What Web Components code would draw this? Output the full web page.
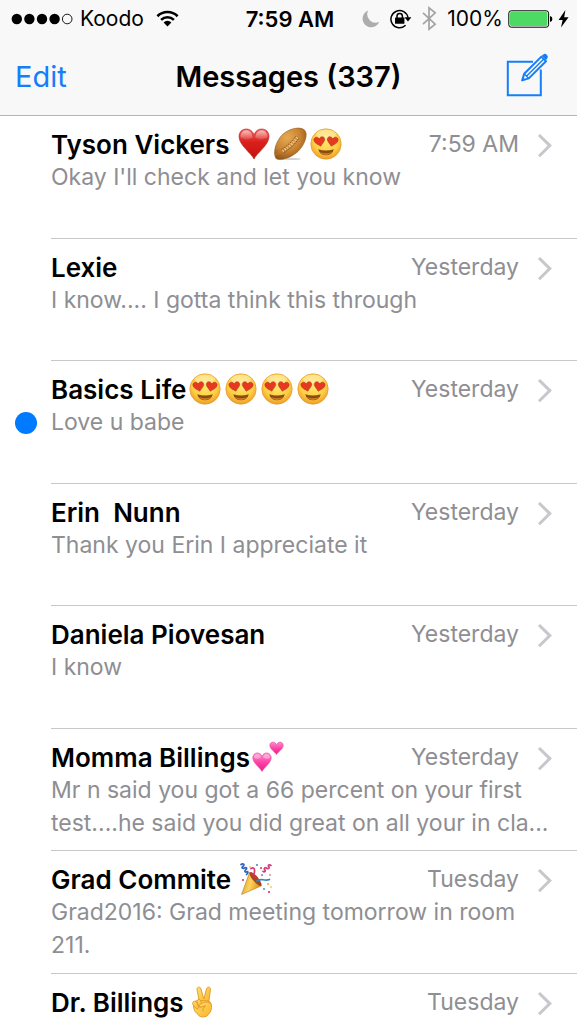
<!DOCTYPE html>
<html lang="en">
<head>
<meta charset="utf-8">
<meta name="viewport" content="width=device-width, initial-scale=1">
<title>Messages</title>
<style>
  body {
    margin: 0;
    height: 100vh;
    overflow: hidden;
    background: #fff;
    color: #000;
    font-family: Inter, "Liberation Sans", sans-serif;
  }
</style>
</head>
<body>
<messages-app>
  <status-bar slot="header" carrier="Koodo" time="7:59 AM" battery="100%"></status-bar>
  <nav-bar slot="header">Messages (337)</nav-bar>

  <message-row time="7:59 AM">Tyson Vickers <emoji-icon name="heart"></emoji-icon><emoji-icon name="football"></emoji-icon><emoji-icon name="love"></emoji-icon><span slot="preview">Okay I'll check and let you know</span></message-row>
  <message-row time="Yesterday">Lexie<span slot="preview">I know.... I gotta think this through</span></message-row>
  <message-row time="Yesterday" unread>Basics Life<emoji-icon name="love"></emoji-icon><emoji-icon name="love"></emoji-icon><emoji-icon name="love"></emoji-icon><emoji-icon name="love"></emoji-icon><span slot="preview">Love u babe</span></message-row>
  <message-row time="Yesterday">Erin  Nunn<span slot="preview">Thank you Erin I appreciate it</span></message-row>
  <message-row time="Yesterday">Daniela Piovesan<span slot="preview">I know</span></message-row>
  <message-row time="Yesterday">Momma Billings<emoji-icon name="hearts"></emoji-icon><span slot="preview">Mr n said you got a 66 percent on your first test....he said you did great on all your in cla...</span></message-row>
  <message-row time="Tuesday">Grad Commite <emoji-icon name="party"></emoji-icon><span slot="preview">Grad2016: Grad meeting tomorrow in room 211.</span></message-row>
  <message-row time="Tuesday">Dr. Billings<emoji-icon name="victory"></emoji-icon></message-row>
</messages-app>

<script>
const appTemplate = document.createElement("template");
appTemplate.innerHTML = `
  <style>
    :host { display: block; }
    header {
      background: #f8f8f8;
      border-bottom: 1px solid #b4b4b7;
    }
    ::slotted(message-row) { min-height: 123px; }
    ::slotted(message-row:nth-of-type(even)) { min-height: 122px; }
  </style>
  <header><slot name="header"></slot></header>
  <main><slot></slot></main>
`;

const statusTemplate = document.createElement("template");
statusTemplate.innerHTML = `
  <style>
    :host {
      display: grid;
      grid-template-columns: 1fr auto 1fr;
      align-items: center;
      height: 37px;
      padding: 0 8px 0 11px;
      font-size: 21px;
    }
    div { display: flex; align-items: center; }
    svg { display: block; flex: none; }
    .left { gap: 7px; }
    .wifi { margin-left: 5px; }
    .time { font-weight: 600; font-size: 22px; }
    .right { justify-content: flex-end; gap: 10px; }
    .power { gap: 5px; }
  </style>
  <div class="left">
    <svg width="62" height="12" viewBox="0 0 62 12" role="img" aria-label="Signal">
      <circle cx="5.8" cy="6" r="5.2"/><circle cx="18.4" cy="6" r="5.2"/>
      <circle cx="31" cy="6" r="5.2"/><circle cx="43.6" cy="6" r="5.2"/>
      <circle cx="56.2" cy="6" r="4.8" fill="none" stroke="#000" stroke-width=".9"/>
    </svg>
    <span class="carrier"></span>
    <svg class="wifi" width="23" height="17" viewBox="0 0 23 17" role="img" aria-label="Wi-Fi">
      <g fill="none" stroke="#000" stroke-width="2.6">
        <path d="M1.4 6.2a14.4 14.4 0 0 1 20.2 0"/>
        <path d="M5.1 9.9a9.2 9.2 0 0 1 12.8 0"/>
      </g>
      <path d="M7.6 12.4a5.6 5.6 0 0 1 7.8 0L11.5 16.4z"/>
    </svg>
  </div>
  <span class="time"></span>
  <div class="right">
    <svg width="18" height="18" viewBox="0 0 18 18" role="img" aria-label="Do not disturb">
      <path fill="#adadad" d="M6.2.6A8.6 8.6 0 1 0 17.2 11.8 8.3 8.3 0 0 1 6.2.6z"/>
    </svg>
    <svg width="22" height="20" viewBox="0 0 22 20" role="img" aria-label="Rotation lock">
      <path fill="none" stroke="#000" stroke-width="1.5" d="M15.6 16.3A8.6 8.6 0 1 1 18 8.7"/>
      <path d="M14.4 8.2h7l-3.4 4.4z"/>
      <rect x="5" y="8.6" width="9.4" height="6.2" rx=".6"/>
      <path fill="none" stroke="#000" stroke-width="1.5" d="M7 9V7.2a2.7 2.7 0 0 1 5.4 0V9"/>
    </svg>
    <svg width="15" height="25" viewBox="0 0 15 25" role="img" aria-label="Bluetooth">
      <path fill="none" stroke="#a3a3a3" stroke-width="1.7" d="M1 6.8l12.2 11.3-6.2 5V1.9l6.2 5L1 18.1"/>
    </svg>
    <div class="power">
      <span class="level"></span>
      <svg width="45" height="18" viewBox="0 0 45 18" role="img" aria-label="Battery full">
        <rect x=".8" y=".8" width="39.8" height="16.4" rx="2.4" fill="none" stroke="#000" stroke-width="1"/>
        <rect x="2" y="2" width="37.4" height="14" rx="1.4" fill="#4cd964"/>
        <path d="M42 6q2.4 .6 2.4 3T42 12z"/>
      </svg>
      <svg width="11" height="18" viewBox="0 0 11 18" role="img" aria-label="Charging">
        <path d="M7.4 0L.6 10h4L3 17.4 10.6 7.2H6.2z"/>
      </svg>
    </div>
  </div>
`;

const navTemplate = document.createElement("template");
navTemplate.innerHTML = `
  <style>
    :host {
      display: grid;
      grid-template-columns: 1fr auto 1fr;
      align-items: center;
      height: 78px;
      padding: 0 28px 0 15px;
    }
    h1 { margin: 0 -7px 0 6px; font-size: 29px; font-weight: 600; }
    button {
      padding: 0;
      border: 0;
      background: none;
      color: #157efb;
      font: inherit;
      font-size: 29px;
      cursor: pointer;
    }
    .edit { justify-self: start; }
    .compose { justify-self: end; padding-bottom: 5px; }
    svg { display: block; }
  </style>
  <button class="edit">Edit</button>
  <h1><slot></slot></h1>
  <button class="compose" aria-label="New message">
    <svg width="43" height="46" viewBox="0 0 43 46" fill="none" stroke="#157efb">
      <path stroke-width="2" d="M27 10.8H1.8v33.4h33V18.4"/>
      <path stroke-width="2" stroke-linejoin="round" d="M16.2 29.4l2-6.6L35.4 5.6l4.6 4.6L22.8 27.4z"/>
      <path stroke-width="1.4" d="M18.4 23l4.2 4.2M20.7 25.1L37.8 8"/>
      <path fill="#157efb" stroke="none" d="M35.8 4.8l1.4-1.4q1.7-1.4 3.6.3t.5 3.9l-1.3 1.4zM15.6 30l1.2-4 2.8 2.8z"/>
    </svg>
  </button>
`;

const rowTemplate = document.createElement("template");
rowTemplate.innerHTML = `
  <style>
    :host { display: grid; }
    a {
      display: grid;
      grid-template-columns: 51px minmax(0, 1fr);
      color: inherit;
      text-decoration: none;
    }
    .dot {
      align-self: center;
      justify-self: center;
      width: 22px;
      height: 22px;
      border-radius: 50%;
    }
    :host([unread]) .dot { background: #007aff; }
    .body {
      padding: 12px 24px 0 0;
      border-bottom: 1px solid #c8c7cc;
      line-height: 33px;
    }
    .top { display: flex; align-items: center; }
    h2 {
      flex: 1;
      margin: 0;
      font-size: 26px;
      font-weight: 600;
      line-height: 33px;
      height: 33px;
      white-space: pre;
    }
    time { color: #8e8e93; font-size: 23px; }
    .chevron { margin-left: 18px; }
    p {
      margin: 0;
      color: #8e8e93;
      font-size: 23px;
    }
  </style>
  <a href="#">
    <span class="dot"></span>
    <div class="body">
      <div class="top">
        <h2><slot></slot></h2>
        <time></time>
        <svg class="chevron" width="16" height="26" viewBox="0 0 16 26" aria-hidden="true">
          <path fill="none" stroke="#c7c7cc" stroke-width="3" d="M2 3l10.8 10.6L2 24.2"/>
        </svg>
      </div>
      <p><slot name="preview"></slot></p>
    </div>
  </a>
`;

// all emoji are drawn on a 32 x 32 grid
const emoji = {
  heart: {
    label: "red heart",
    art: `
      <defs><linearGradient id="g" x2="0" y2="1"><stop stop-color="#f0605a"/><stop offset=".45" stop-color="#d91f1c"/><stop offset="1" stop-color="#c4120f"/></linearGradient>
      <linearGradient id="s" x2="0" y2="1"><stop stop-color="#fff" stop-opacity=".6"/><stop offset="1" stop-color="#fff" stop-opacity=".1"/></linearGradient></defs>
      <path fill="url(#g)" stroke="#b5211d" stroke-width=".6" d="M16 31C13 25 1 17 1 8.600C1 4 4 1 8.300 1 12 1 15 3.500 16 7 17 3.500 20 1 23.700 1 28 1 31 4 31 8.600 31 17 19 25 16 31z"/>
      <path fill="url(#s)" d="M2.500 9C2.500 5 5 2.200 8.300 2.200c3.700 0 6 3 6.400 7.400-4 2.600-9 2.400-12.200-.6zM29.500 9c0-4-2.500-6.800-5.800-6.800-3.700 0-6 3-6.400 7.400 4 2.600 9 2.400 12.200-.6z"/>`
  },
  football: {
    label: "rugby football",
    art: `
      <defs><radialGradient id="g" cx=".4" cy=".3" r=".75"><stop stop-color="#e6a954"/><stop offset=".55" stop-color="#ca8532"/><stop offset="1" stop-color="#8c5217"/></radialGradient></defs>
      <ellipse cx="18" cy="31" rx="9" ry="1" fill="#000" opacity=".18"/>
      <path fill="url(#g)" stroke="#9b6120" stroke-width=".6" d="M2 30.500C-1.500 25 1.500 13.500 8.500 6.500 15 .5 26-2 30.500 2c4 4 .5 14.500-6.500 21.500C17 30 6 33.500 2 30.500z"/>
      <path fill="none" stroke="#bd8037" stroke-width=".7" d="M1.500 27C8 24 22 13 29.500 1.500"/>
      <path fill="none" stroke="#e9c999" stroke-width="2.800" stroke-dasharray="1.200 1.500" d="M8.500 23C14 19.500 20 14.500 23.500 9"/>
      <path fill="none" stroke="#70410f" stroke-width=".8" stroke-dasharray="1.600 1.100" d="M7.500 21.500C13 18 18.500 13 22 8M10 24.500C15.500 21 21.500 16 25 10"/>`
  },
  love: {
    label: "smiling face with heart-eyes",
    art: `
      <defs><radialGradient id="g" cx=".5" cy=".38" r=".62"><stop stop-color="#ffeb70"/><stop offset=".65" stop-color="#fdcf46"/><stop offset="1" stop-color="#ee9d25"/></radialGradient></defs>
      <circle cx="16" cy="16" r="15.200" fill="url(#g)" stroke="#e59a34" stroke-width=".7"/>
      <ellipse cx="16" cy="6.500" rx="10" ry="4.800" fill="#fff" opacity=".35"/>
      <path fill="#e7391f" stroke="#b9361e" stroke-width=".6" d="M10.800 18.200C8.500 16.500 4.300 15.500 3.900 12c-.3-2.800 3.800-4 5.400-1 1-3.300 5.400-2.800 5.400.2 0 2.700-2.700 4.400-3.900 7zM21.200 18.200c2.300-1.700 6.500-2.700 6.900-6.200.3-2.800-3.800-4-5.400-1-1-3.300-5.400-2.800-5.400.2 0 2.700 2.700 4.400 3.900 7z"/>
      <path fill="#8d4a12" d="M8.200 21.200Q16 24 23.800 21.200 22.200 27.300 16 27.300T8.200 21.200z"/>
      <path fill="#c87e20" d="M10 24q6 2.500 12 0-2 2.900-6 2.900T10 24z"/>`
  },
  hearts: {
    label: "two hearts",
    art: `
      <defs><linearGradient id="g" x2="0" y2="1"><stop stop-color="#ff8fcb"/><stop offset=".55" stop-color="#fb3ea5"/><stop offset="1" stop-color="#e91e8c"/></linearGradient></defs>
      <g fill="url(#g)" stroke="#e64ca2" stroke-width=".6">
        <path d="M10 30.500C8 26.500.8 22 .8 16.800c0-5.600 7.300-6.800 9.200-1.300 1.900-5.500 9.200-4.300 9.200 1.300 0 5.200-7.200 9.700-9.200 13.700z"/>
        <path d="M24.500 13.500c-1.500-2.800-6.700-5.300-6.700-9C17.800.3 23 0 24.500 3.700 26 0 31.200.3 31.200 4.500c0 3.700-5.200 6.200-6.700 9z"/>
      </g>
      <path fill="#fff" opacity=".35" d="M2 16.500c.3-4 5-5 7-.5-1.500 2-5 2.500-7 .5zM11 16c2-4.500 6.700-3.500 7 .5-2 2-5.500 1.500-7-.5z"/>`
  },
  party: {
    label: "party popper",
    art: `
      <defs><linearGradient id="g" x2="1" y2=".3"><stop stop-color="#d78d1b"/><stop offset=".55" stop-color="#ffd45c"/><stop offset="1" stop-color="#dd9422"/></linearGradient></defs>
      <path fill="url(#g)" stroke="#a9691a" stroke-width=".5" d="M1.500 31.500L9.500 9.500Q17 14 21 23z"/>
      <path fill="#9a4c1a" d="M9.500 9.500c2.500-1 6 2 9 6s4 7.500 2.500 7.500c-3 0-12-8.500-11.500-13.500z"/>
      <path fill="#c23c2d" d="M10 9.500c2-1 5.500 2 8.500 6l-3 1.500q-5-3.500-5.500-7.500z"/>
      <g fill="none" stroke-linecap="round" stroke-width="1.700">
        <path stroke="#2f63bd" d="M1 1.500c2.500-1.500 4 .5 2 1.700s-.5 3 1.500 1.800 3 .6 1.200 1.900-.3 2.800 1.300 1.900.8 2.200-.5 2.700"/>
        <path stroke="#d73a76" d="M11 5.500c4-2 4 2 3 6M31 2.500c-1.500-1.500-3.500 0-2.200 1.200s-1 2.800-2.300 1.500-3 .2-1.700 1.700-.6 2.700-1.800 1.500"/>
        <path stroke="#3a83c8" d="M17 18c4-3.500 7 .5 12.500-1.500"/>
      </g>
      <g fill="#3d83cb"><circle cx="17" cy="2" r="1"/><circle cx="22" cy="12" r=".9"/><circle cx="24" cy="26" r=".9"/></g>
      <g fill="#d7325f"><circle cx="3" cy="17" r="1.100"/><circle cx="21" cy="5" r="1"/><circle cx="30" cy="12" r=".8"/><circle cx="29" cy="29" r="1.100"/></g>
      <g fill="#e5a531"><circle cx="10" cy="4" r=".8"/><circle cx="28" cy="21" r="1"/><circle cx="31" cy="24" r=".8"/></g>`
  },
  victory: {
    label: "victory hand",
    art: `
      <defs><linearGradient id="g" x2="1" y2="1"><stop stop-color="#ffdf70"/><stop offset="1" stop-color="#fbb42a"/></linearGradient></defs>
      <g fill="url(#g)" stroke="#dc8f1d" stroke-width=".8" stroke-linejoin="round">
        <path d="M13.500 17L11 3.500C10.600.8 14.300.2 15 2.800L17.800 13 20.500 2.700C21.300.2 25 .9 24.500 3.600L22.500 17.500z"/>
        <path d="M8 18c0-3 3-4 6.500-3.500l7.500.5c3 .5 3.700 3 3.500 6.500-.2 4-2 6-3.500 7.200-.7 3-9 3-9.700 0C9 26.500 6.500 22 8 18z"/>
        <path d="M6.800 18.500c-1-2.800 2-4.300 3.700-2.300l2.300 4c.8 2-1.800 3.300-3.200 1.900z"/>
        <path d="M11 16c-.6-2.600 2.800-3.300 3.700-1.200l1.600 4c.5 2.200-2.400 3-3.500 1.200z"/>
        <path d="M24.500 17.500c-3-2.500-7.500-1.500-10.500 1-1.500 1.500 0 3 1.800 2.300l3.700-1c-2 1.500-3 3-2.700 5.500"/>
      </g>`
  }
};

class MessagesApp extends HTMLElement {
  constructor() {
    super();
    this.attachShadow({ mode: "open" }).appendChild(appTemplate.content.cloneNode(true));
  }
}

class StatusBar extends HTMLElement {
  constructor() {
    super();
    const shadow = this.attachShadow({ mode: "open" });
    shadow.appendChild(statusTemplate.content.cloneNode(true));
    shadow.querySelector(".carrier").textContent = this.getAttribute("carrier");
    shadow.querySelector(".time").textContent = this.getAttribute("time");
    shadow.querySelector(".level").textContent = this.getAttribute("battery");
  }
}

class NavBar extends HTMLElement {
  constructor() {
    super();
    this.attachShadow({ mode: "open" }).appendChild(navTemplate.content.cloneNode(true));
  }
}

class MessageRow extends HTMLElement {
  constructor() {
    super();
    const shadow = this.attachShadow({ mode: "open" });
    shadow.appendChild(rowTemplate.content.cloneNode(true));
    shadow.querySelector("time").textContent = this.getAttribute("time");
    if (this.hasAttribute("unread")) {
      const dot = shadow.querySelector(".dot");
      dot.setAttribute("role", "img");
      dot.setAttribute("aria-label", "Unread");
    }
  }
}

class EmojiIcon extends HTMLElement {
  constructor() {
    super();
    const { label, art } = emoji[this.getAttribute("name")];
    // white-space is reset because the row title keeps its spaces
    this.attachShadow({ mode: "open" }).innerHTML = `
      <style>
        :host {
          display: inline-block;
          width: 36px;
          height: 32px;
          vertical-align: top;
          white-space: normal;
        }
        svg { display: block; margin: 0 auto; overflow: visible; }
      </style>
      <svg width="32" height="32" viewBox="0 0 32 32" role="img" aria-label="${label}">${art}</svg>
    `;
  }
}

customElements.define("messages-app", MessagesApp);
customElements.define("status-bar", StatusBar);
customElements.define("nav-bar", NavBar);
customElements.define("message-row", MessageRow);
customElements.define("emoji-icon", EmojiIcon);
</script>
</body>
</html>
